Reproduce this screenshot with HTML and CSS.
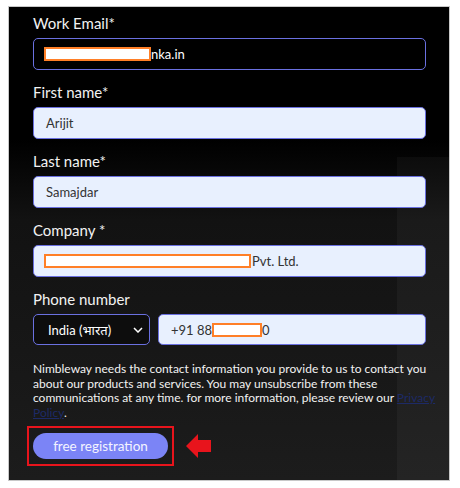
FILE: index.html
```html
<!DOCTYPE html>
<html lang="en">
<head>
    <meta charset="UTF-8">
    <title>Free registration</title>
    <link rel="stylesheet" href="styles.css">
</head>
<body>
    <div class="frame">
        <form class="signup">
            <label class="field-label">Work Email*</label>
            <div class="input input-dark">
                <span class="redact redact-email"></span><span>nka.in</span>
            </div>

            <label class="field-label">First name*</label>
            <div class="input input-filled">Arijit</div>

            <label class="field-label">Last name*</label>
            <div class="input input-filled">Samajdar</div>

            <label class="field-label">Company *</label>
            <div class="input input-filled">
                <span class="redact redact-company"></span><span>Pvt. Ltd.</span>
            </div>

            <label class="field-label">Phone number</label>
            <div class="phone-row">
                <div class="input input-dark country">
                    <span>India (भारत)</span>
                    <svg class="chevron" width="10" height="6" viewBox="0 0 10 6">
                        <path d="M1 1 L5 5 L9 1" fill="none" stroke="#fff" stroke-width="1.5"/>
                    </svg>
                </div>
                <div class="input input-filled phone">
                    <span>+91 88</span><span class="redact redact-phone"></span><span>0</span>
                </div>
            </div>

            <p class="notice">
                Nimbleway needs the contact information you provide to us to contact you<br>
                about our products and services. You may unsubscribe from these<br>
                communications at any time. for more information, please review our
                <a href="#">Privacy<br>Policy</a>.
            </p>

            <div class="submit-row">
                <div class="highlight">
                    <button type="button" class="submit">free registration</button>
                </div>
                <svg class="arrow" width="26" height="26" viewBox="0 0 26 26">
                    <path d="M0 13 L12 1 L12 7 L25 7 L25 19 L12 19 L12 25 Z" fill="#e8141c"/>
                </svg>
            </div>
        </form>
    </div>
</body>
</html>
```

FILE: styles.css
```css
* {
    margin: 0;
    padding: 0;
    box-sizing: border-box;
}

body {
    background: #fff;
    font-family: Lato, "Noto Sans", sans-serif;
    padding: 6px 10px 7px 8px;
}

.frame {
    height: 475px;
    border: 1px solid #c8c8c8;
    background: linear-gradient(180deg, #000 0%, #000 28%, #121212 45%, #1c1c1c 100%);
    padding: 6px 23px 0 24px;
    position: relative;
    overflow: hidden;
}

.frame::after {
    content: "";
    position: absolute;
    left: 388px;
    top: 150px;
    right: 0;
    bottom: 0;
    background: rgba(255, 255, 255, 0.035);
}

.signup {
    position: relative;
    z-index: 1;
}

.field-label {
    display: block;
    color: #f2f2f2;
    font-size: 15px;
    line-height: 20px;
    margin-bottom: 5px;
}

.input {
    display: flex;
    align-items: center;
    height: 32px;
    border: 1.5px solid #6a70e0;
    border-radius: 5px;
    padding: 0 12px;
    font-size: 13px;
    margin-bottom: 12px;
}

.input-dark {
    background: #000;
    color: #fff;
}

.input-filled {
    background: #e8f0fe;
    color: #333;
}

.redact {
    display: inline-block;
    height: 14px;
    border: 2px solid #ff7f27;
    background: #fff;
}

.redact-email {
    width: 107px;
    margin-left: -2px;
}

.redact-company {
    width: 207px;
    margin-left: -2px;
    margin-right: 1px;
}

.redact-phone {
    width: 50px;
}

.phone-row {
    display: flex;
    gap: 8px;
}

.phone-row .input {
    height: 31px;
}

.country {
    width: 117px;
    flex: none;
    justify-content: space-between;
    padding: 0 6px 0 14px;
    background: #0d0d0d;
}

.phone {
    flex: 1;
}

.notice {
    color: #f2f2f2;
    font-size: 12px;
    line-height: 14.5px;
    margin-top: 5px;
    margin-right: -12px;
    white-space: nowrap;
}

.notice a {
    color: #1d2a66;
}

.submit-row {
    display: flex;
    align-items: center;
    margin-top: 6px;
    margin-left: -6px;
    gap: 12px;
}

.highlight {
    border: 2px solid #e8141c;
    padding: 5px 4px 5px 4px;
}

.submit {
    background: #7b84f6;
    color: #f4f4ff;
    border: none;
    border-radius: 14px;
    height: 26px;
    width: 135px;
    font-family: inherit;
    font-size: 13.5px;
}
```
